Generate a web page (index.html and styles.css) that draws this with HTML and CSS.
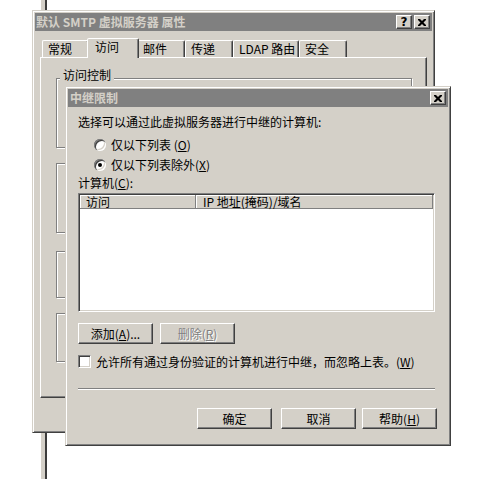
FILE: index.html
```html
<!DOCTYPE html>
<html lang="zh-CN">
<head>
<meta charset="utf-8">
<title>中继限制</title>
<link rel="stylesheet" href="styles.css">
</head>
<body>
<div class="pole"></div>

<div class="win outer">
  <div class="titlebar">
    <span class="title">默认 SMTP 虚拟服务器 属性</span>
    <span class="capbtns">
      <span class="capbtn help">?</span>
      <span class="capbtn"><svg width="8" height="7" viewBox="0 0 8 7"><path d="M0 0h2l2 2 2-2h2v1L5.5 3.5 8 6v1H6L4 5 2 7H0V6l2.5-2.5L0 1z" fill="#000"/></svg></span>
    </span>
  </div>
  <div class="tabs">
    <span class="tab w47">常规</span>
    <span class="tab sel">访问</span>
    <span class="tab w48">邮件</span>
    <span class="tab w48">传递</span>
    <span class="tab w66">LDAP 路由</span>
    <span class="tab w48">安全</span>
  </div>
  <div class="panel">
    <div class="group g1"><span class="glabel">访问控制</span></div>
    <div class="group g2"></div>
    <div class="group g3"></div>
    <div class="group g4"></div>
  </div>
</div>

<div class="win dialog">
  <div class="titlebar">
    <span class="title dtitle">中继限制</span>
    <span class="capbtns">
      <span class="capbtn"><svg width="8" height="7" viewBox="0 0 8 7"><path d="M0 0h2l2 2 2-2h2v1L5.5 3.5 8 6v1H6L4 5 2 7H0V6l2.5-2.5L0 1z" fill="#000"/></svg></span>
    </span>
  </div>
  <div class="dlg-body">
    <div class="line">选择可以通过此虚拟服务器进行中继的计算机:</div>
    <div class="radio-row r1"><span class="radio"></span><span>仅以下列表 (<u>O</u>)</span></div>
    <div class="radio-row r2"><span class="radio on"></span><span>仅以下列表除外(<u>X</u>)</span></div>
    <div class="line lbl">计算机(<u>C</u>):</div>
    <div class="list">
      <div class="lhead">
        <span class="col c1">访问</span>
        <span class="col c2">IP 地址(掩码)/域名</span>
      </div>
    </div>
    <div class="btnrow">
      <span class="btn">添加(<u>A</u>)...</span>
      <span class="btn dis">删除(<u>R</u>)</span>
    </div>
    <div class="checkrow">
      <span class="check"></span>
      <span>允许所有通过身份验证的计算机进行中继，而忽略上表。(<u>W</u>)</span>
    </div>
    <div class="sep"></div>
    <div class="footer">
      <span class="btn ok">确定</span>
      <span class="btn cancel">取消</span>
      <span class="btn">帮助(<u>H</u>)</span>
    </div>
  </div>
</div>
</body>
</html>
```
FILE: styles.css
```css
body {
  margin: 0;
  width: 496px;
  height: 479px;
  position: relative;
  overflow: hidden;
  background: #fff;
  font-family: "Noto Sans CJK SC", sans-serif;
  font-size: 12px;
  color: #000;
}

.pole {
  position: absolute;
  left: 41px;
  top: 0;
  width: 4px;
  height: 479px;
  background: #d4d0c8;
  border-right: 2px solid #3c3c3c;
}

.win {
  position: absolute;
  box-sizing: border-box;
  background: #d4d0c8;
  border: 1px solid;
  border-color: #d4d0c8 #404040 #404040 #d4d0c8;
  box-shadow: inset 1px 1px 0 #fff, inset -1px -1px 0 #808080;
  padding: 2px;
  display: flex;
  flex-direction: column;
}

.outer {
  left: 32px;
  top: 10px;
  width: 403px;
  height: 423px;
}

.dialog {
  left: 65px;
  top: 86px;
  width: 386px;
  height: 360px;
}

.titlebar {
  height: 18px;
  flex: none;
  background: #808080;
  color: #d4d0c8;
  display: flex;
  align-items: center;
  justify-content: space-between;
  padding: 0 2px 0 1px;
}

.title {
  font-weight: bold;
  line-height: 18px;
  white-space: nowrap;
}

.dtitle {
  padding-left: 1px;
}

.capbtns {
  display: flex;
  gap: 2px;
}

.capbtn {
  width: 16px;
  height: 14px;
  box-sizing: border-box;
  background: #d4d0c8;
  border: 1px solid;
  border-color: #fff #404040 #404040 #fff;
  box-shadow: inset -1px -1px 0 #808080;
  display: flex;
  align-items: center;
  justify-content: center;
  color: #000;
}

.capbtn.help {
  font-weight: bold;
  font-size: 12px;
  line-height: 12px;
  font-family: "DejaVu Sans", sans-serif;
}

.tabs {
  display: flex;
  align-items: flex-end;
  height: 19px;
  margin: 7px 0 0 7px;
  flex: none;
}

.tab {
  box-sizing: border-box;
  height: 17px;
  border: 1px solid;
  border-bottom: none;
  border-color: #fff #404040 transparent #fff;
  border-radius: 2px 2px 0 0;
  box-shadow: inset -1px 0 0 #808080;
  padding-left: 5px;
  line-height: 15px;
  white-space: nowrap;
}

.tab.sel {
  width: 52px;
  height: 20px;
  margin: 0 -2px -1px;
  padding-left: 7px;
  position: relative;
  z-index: 1;
  background: #d4d0c8;
  line-height: 16px;
}

.w47 { width: 47px; }
.w48 { width: 48px; }
.w66 { width: 66px; }

.panel {
  box-sizing: border-box;
  height: 341px;
  margin: 0 5px;
  border: 1px solid;
  border-color: #fff #404040 #404040 #fff;
  box-shadow: inset -1px -1px 0 #808080;
  padding: 20px 14px 0 15px;
}

.group {
  position: relative;
  box-sizing: border-box;
  border: 1px solid #808080;
  box-shadow: inset 1px 1px 0 #fff, 1px 1px 0 #fff;
}

.g1 { height: 70px; }
.g2 { height: 70px; margin-top: 15px; }
.g3 { height: 47px; margin-top: 18px; }
.g4 { height: 49px; margin-top: 15px; }

.glabel {
  position: absolute;
  top: -12px;
  left: 3px;
  padding: 0 3px;
  background: #d4d0c8;
  line-height: 16px;
}

.dlg-body {
  flex: 1;
  display: flex;
  flex-direction: column;
  padding: 7px 11px 0 10px;
}

.line {
  height: 16px;
  line-height: 16px;
  white-space: nowrap;
}

.radio-row {
  display: flex;
  align-items: center;
  gap: 5px;
  height: 16px;
  line-height: 16px;
  margin-left: 16px;
}

.r1 { margin-top: 7px; }
.r2 { margin-top: 4px; }
.lbl { margin-top: 2px; }

.radio {
  position: relative;
  width: 12px;
  height: 12px;
  border-radius: 50%;
  background: #fff;
  box-shadow: inset 1px 1px 0 #808080, inset 2px 2px 0 #404040, inset -1px -1px 0 #fff, inset -2px -2px 0 #d4d0c8;
}

.radio.on::after {
  content: "";
  position: absolute;
  left: 4px;
  top: 4px;
  width: 4px;
  height: 4px;
  border-radius: 50%;
  background: #000;
}

.list {
  box-sizing: border-box;
  height: 119px;
  margin: 2px 2px 0 0;
  background: #fff;
  border: 1px solid;
  border-color: #808080 #fff #fff #808080;
  box-shadow: inset 1px 1px 0 #404040, inset -1px -1px 0 #d4d0c8;
  padding: 1px;
}

.lhead {
  display: flex;
  height: 14px;
}

.col {
  box-sizing: border-box;
  height: 14px;
  background: #d4d0c8;
  border-right: 1px solid #808080;
  border-bottom: 1px solid #808080;
  box-shadow: inset 1px 1px 0 #fff;
  line-height: 13px;
  white-space: nowrap;
}

.c1 {
  width: 116px;
  padding-left: 6px;
}

.c2 {
  flex: 1;
  padding-left: 7px;
}

.btnrow {
  display: flex;
  gap: 7px;
  margin-top: 11px;
}

.btn {
  box-sizing: border-box;
  width: 75px;
  height: 21px;
  background: #d4d0c8;
  border: 1px solid;
  border-color: #fff #404040 #404040 #fff;
  box-shadow: inset -1px -1px 0 #808080;
  display: flex;
  align-items: center;
  justify-content: center;
  line-height: 16px;
  white-space: nowrap;
}

.btn.dis {
  color: #808080;
  text-shadow: 1px 1px 0 #fff;
}

.checkrow {
  display: flex;
  align-items: center;
  gap: 5px;
  height: 13px;
  margin-top: 11px;
  line-height: 16px;
  white-space: nowrap;
}

.check {
  box-sizing: border-box;
  width: 13px;
  height: 13px;
  flex: none;
  background: #fff;
  border: 1px solid;
  border-color: #808080 #fff #fff #808080;
  box-shadow: inset 1px 1px 0 #404040, inset -1px -1px 0 #d4d0c8;
}

.sep {
  height: 0;
  margin: 20px 2px 0 0;
  border-top: 1px solid #808080;
  border-bottom: 1px solid #fff;
}

.footer {
  display: flex;
  justify-content: flex-end;
  margin-top: 18px;
}

.ok { margin-right: 9px; }
.cancel { margin-right: 6px; }
```
